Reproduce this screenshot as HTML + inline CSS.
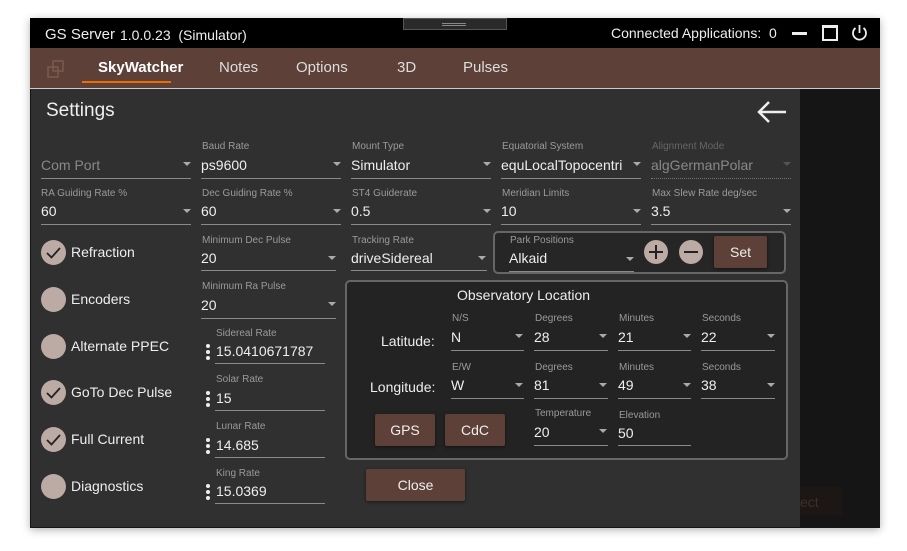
<!DOCTYPE html>
<html><head><meta charset="utf-8"><style>
*{margin:0;padding:0;box-sizing:border-box}
body{width:907px;height:551px;background:#fff;font-family:"Liberation Sans",sans-serif;position:relative;overflow:hidden}
.a{position:absolute;white-space:nowrap}
.lb{position:absolute;font-size:10px;color:#9a9a9a;white-space:nowrap}
.v{position:absolute;font-size:14px;color:#eee;white-space:nowrap}
.u{position:absolute;height:1px;background:#8a8a8a}
.ar{position:absolute;width:0;height:0;border-left:4px solid transparent;border-right:4px solid transparent;border-top:4px solid #aaa}
.cb{position:absolute;width:25px;height:25px;border-radius:50%;background:#bcaaa4}
.cl{position:absolute;font-size:14px;color:#eee}
.btn{position:absolute;background:#5d4037;color:#eee;font-size:14px;text-align:center;border-radius:2px;box-shadow:0 1px 3px rgba(0,0,0,.5)}
.dots{position:absolute;width:4px}
.dots i{display:block;width:4px;height:4px;border-radius:50%;background:#eee;margin-bottom:2px}
</style></head><body>
<div class="a" style="left:30px;top:18px;width:850px;height:510px;background:#151515;box-shadow:0 2px 8px rgba(0,0,0,.3)"></div>
<div class="a" style="left:30px;top:18px;width:850px;height:30px;background:#000"></div>
<div class="a" style="left:403px;top:18px;width:104px;height:12px;background:#2a2a2a;border:1px solid #555"></div>
<div class="a" style="left:442px;top:23px;width:24px;height:1px;background:#888"></div>
<div class="a" style="left:442px;top:25px;width:24px;height:1px;background:#888"></div>
<div class="a" style="left:45px;top:26px;font-size:15px;color:#eee">GS Server</div>
<div class="a" style="left:120px;top:27px;font-size:14px;color:#eee">1.0.0.23 &nbsp;(Simulator)</div>
<div class="a" style="left:611px;top:25px;font-size:14px;color:#eee">Connected Applications: &nbsp;0</div>
<div class="a" style="left:792px;top:32px;width:15px;height:3px;background:#eee"></div>
<div class="a" style="left:822px;top:25px;width:16px;height:16px;border:2px solid #eee;border-top-width:3px"></div>
<svg class="a" style="left:850px;top:23px" width="19" height="19" viewBox="0 0 19 19"><path d="M5.5 5 A6.5 6.5 0 1 0 13.5 5" fill="none" stroke="#eee" stroke-width="1.8"/><path d="M9.5 2 V10" stroke="#eee" stroke-width="1.8"/></svg>
<div class="a" style="left:30px;top:48px;width:850px;height:40px;background:#5d4037"></div>
<svg class="a" style="left:47px;top:60px" width="18" height="18" viewBox="0 0 18 18"><rect x="1" y="7" width="10" height="10" fill="none" stroke="#7a5a50" stroke-width="1.5"/><rect x="6" y="1" width="10" height="10" fill="none" stroke="#7a5a50" stroke-width="1.5"/></svg>
<div class="a" style="left:98px;top:59px;font-size:15px;color:#fff;font-weight:bold">SkyWatcher</div>
<div class="a" style="left:82px;top:81px;width:89px;height:2px;background:#ef6c00"></div>
<div class="a" style="left:219px;top:59px;font-size:15px;color:#ddd">Notes</div>
<div class="a" style="left:296px;top:59px;font-size:15px;color:#ddd">Options</div>
<div class="a" style="left:397px;top:59px;font-size:15px;color:#ddd">3D</div>
<div class="a" style="left:463px;top:59px;font-size:15px;color:#ddd">Pulses</div>
<div class="a" style="left:30px;top:88px;width:850px;height:1px;background:#ccc"></div>
<div class="a" style="left:31px;top:89px;width:769px;height:438px;background:#303030"></div>
<div class="a" style="left:46px;top:100px;font-size:19px;color:#eee">Settings</div>
<svg class="a" style="left:756px;top:99px" width="32" height="26" viewBox="0 0 32 26"><path d="M30 13 H3 M13 3 L3 13 L13 23" fill="none" stroke="#eee" stroke-width="2.5"/></svg>

<!-- Row1 -->
<div class="v" style="left:41px;top:157px;color:#888">Com Port</div><div class="ar" style="left:183px;top:162px"></div><div class="u" style="left:41px;top:178px;width:150px"></div>
<div class="lb" style="left:202px;top:141px">Baud Rate</div><div class="v" style="left:201px;top:157px">ps9600</div><div class="ar" style="left:333px;top:162px"></div><div class="u" style="left:201px;top:178px;width:140px"></div>
<div class="lb" style="left:352px;top:141px">Mount Type</div><div class="v" style="left:351px;top:157px">Simulator</div><div class="ar" style="left:483px;top:162px"></div><div class="u" style="left:351px;top:178px;width:140px"></div>
<div class="lb" style="left:502px;top:141px">Equatorial System</div><div class="v" style="left:501px;top:157px">equLocalTopocentri</div><div class="ar" style="left:633px;top:162px"></div><div class="u" style="left:501px;top:178px;width:140px"></div>
<div class="lb" style="left:652px;top:141px;color:#666">Alignment Mode</div><div class="v" style="left:651px;top:157px;color:#888">algGermanPolar</div><div class="ar" style="left:783px;top:162px;border-top-color:#555"></div><div class="u" style="left:651px;top:178px;width:140px;background:none;border-top:1px dotted #777"></div>
<!-- Row2 -->
<div class="lb" style="left:41px;top:188px">RA Guiding Rate %</div><div class="v" style="left:41px;top:203px">60</div><div class="ar" style="left:183px;top:209px"></div><div class="u" style="left:41px;top:224px;width:150px"></div>
<div class="lb" style="left:202px;top:188px">Dec Guiding Rate %</div><div class="v" style="left:201px;top:203px">60</div><div class="ar" style="left:333px;top:209px"></div><div class="u" style="left:201px;top:224px;width:140px"></div>
<div class="lb" style="left:352px;top:188px">ST4 Guiderate</div><div class="v" style="left:351px;top:203px">0.5</div><div class="ar" style="left:483px;top:209px"></div><div class="u" style="left:351px;top:224px;width:140px"></div>
<div class="lb" style="left:502px;top:188px">Meridian Limits</div><div class="v" style="left:501px;top:203px">10</div><div class="ar" style="left:633px;top:209px"></div><div class="u" style="left:501px;top:224px;width:140px"></div>
<div class="lb" style="left:652px;top:188px">Max Slew Rate deg/sec</div><div class="v" style="left:651px;top:203px">3.5</div><div class="ar" style="left:783px;top:209px"></div><div class="u" style="left:651px;top:224px;width:140px"></div>

<!-- checkboxes -->
<div class="cb" style="left:41px;top:240px"></div><svg class="a" style="left:41px;top:240px" width="25" height="25"><path d="M6 13 L10.5 17.5 L19 8" fill="none" stroke="#222" stroke-width="1.8"/></svg><div class="cl" style="left:71px;top:244px">Refraction</div>
<div class="cb" style="left:41px;top:287px"></div><div class="cl" style="left:71px;top:291px">Encoders</div>
<div class="cb" style="left:41px;top:334px"></div><div class="cl" style="left:71px;top:338px">Alternate PPEC</div>
<div class="cb" style="left:41px;top:380px"></div><svg class="a" style="left:41px;top:380px" width="25" height="25"><path d="M6 13 L10.5 17.5 L19 8" fill="none" stroke="#222" stroke-width="1.8"/></svg><div class="cl" style="left:71px;top:384px">GoTo Dec Pulse</div>
<div class="cb" style="left:41px;top:427px"></div><svg class="a" style="left:41px;top:427px" width="25" height="25"><path d="M6 13 L10.5 17.5 L19 8" fill="none" stroke="#222" stroke-width="1.8"/></svg><div class="cl" style="left:71px;top:431px">Full Current</div>
<div class="cb" style="left:41px;top:474px"></div><div class="cl" style="left:71px;top:478px">Diagnostics</div>

<div class="lb" style="left:202px;top:235px">Minimum Dec Pulse</div><div class="v" style="left:201px;top:250px">20</div><div class="ar" style="left:328px;top:256px"></div><div class="u" style="left:201px;top:270px;width:135px"></div>
<div class="lb" style="left:352px;top:235px">Tracking Rate</div><div class="v" style="left:351px;top:250px">driveSidereal</div><div class="ar" style="left:478px;top:256px"></div><div class="u" style="left:351px;top:270px;width:136px"></div>
<div class="lb" style="left:202px;top:281px">Minimum Ra Pulse</div><div class="v" style="left:201px;top:297px">20</div><div class="ar" style="left:328px;top:302px"></div><div class="u" style="left:201px;top:318px;width:135px"></div>

<!-- rates -->
<div class="lb" style="left:216px;top:328px">Sidereal Rate</div><div class="dots" style="left:206px;top:344px"><i></i><i></i><i></i></div><div class="v" style="left:216px;top:343px">15.0410671787</div><div class="u" style="left:215px;top:363px;width:110px"></div>
<div class="lb" style="left:216px;top:374px">Solar Rate</div><div class="dots" style="left:206px;top:391px"><i></i><i></i><i></i></div><div class="v" style="left:216px;top:390px">15</div><div class="u" style="left:215px;top:410px;width:110px"></div>
<div class="lb" style="left:216px;top:421px">Lunar Rate</div><div class="dots" style="left:206px;top:438px"><i></i><i></i><i></i></div><div class="v" style="left:216px;top:437px">14.685</div><div class="u" style="left:215px;top:457px;width:110px"></div>
<div class="lb" style="left:216px;top:468px">King Rate</div><div class="dots" style="left:206px;top:484px"><i></i><i></i><i></i></div><div class="v" style="left:216px;top:483px">15.0369</div><div class="u" style="left:215px;top:503px;width:110px"></div>

<!-- park -->
<div class="a" style="left:493px;top:231px;width:293px;height:43px;border:2px solid #666;border-radius:5px;background:#262626"></div>
<div class="lb" style="left:510px;top:235px">Park Positions</div><div class="v" style="left:509px;top:250px">Alkaid</div><div class="ar" style="left:626px;top:257px"></div><div class="u" style="left:509px;top:271px;width:125px"></div>
<svg class="a" style="left:644px;top:240px" width="24" height="24"><circle cx="12" cy="12" r="12" fill="#bcaaa4"/><path d="M5 12H19M12 5V19" stroke="#222" stroke-width="2"/></svg>
<svg class="a" style="left:679px;top:240px" width="24" height="24"><circle cx="12" cy="12" r="12" fill="#bcaaa4"/><path d="M5 12H19" stroke="#222" stroke-width="2"/></svg>
<div class="btn" style="left:714px;top:236px;width:53px;height:32px;line-height:32px">Set</div>

<!-- observatory -->
<div class="a" style="left:345px;top:280px;width:443px;height:180px;border:2px solid #666;border-radius:5px;background:#232323"></div>
<div class="a" style="left:457px;top:287px;font-size:14px;color:#eee">Observatory Location</div>
<div class="a" style="left:381px;top:333px;font-size:14px;color:#eee">Latitude:</div>
<div class="a" style="left:370px;top:379px;font-size:14px;color:#eee">Longitude:</div>
<div class="lb" style="left:452px;top:313px">N/S</div><div class="v" style="left:451px;top:329px">N</div><div class="ar" style="left:515px;top:334px"></div><div class="u" style="left:451px;top:350px;width:73px"></div>
<div class="lb" style="left:535px;top:313px">Degrees</div><div class="v" style="left:534px;top:329px">28</div><div class="ar" style="left:599px;top:334px"></div><div class="u" style="left:534px;top:350px;width:74px"></div>
<div class="lb" style="left:619px;top:313px">Minutes</div><div class="v" style="left:618px;top:329px">21</div><div class="ar" style="left:683px;top:334px"></div><div class="u" style="left:618px;top:350px;width:73px"></div>
<div class="lb" style="left:702px;top:313px">Seconds</div><div class="v" style="left:701px;top:329px">22</div><div class="ar" style="left:767px;top:334px"></div><div class="u" style="left:701px;top:350px;width:74px"></div>
<div class="lb" style="left:452px;top:362px">E/W</div><div class="v" style="left:451px;top:377px">W</div><div class="ar" style="left:515px;top:383px"></div><div class="u" style="left:451px;top:398px;width:73px"></div>
<div class="lb" style="left:535px;top:362px">Degrees</div><div class="v" style="left:534px;top:377px">81</div><div class="ar" style="left:599px;top:383px"></div><div class="u" style="left:534px;top:398px;width:74px"></div>
<div class="lb" style="left:619px;top:362px">Minutes</div><div class="v" style="left:618px;top:377px">49</div><div class="ar" style="left:683px;top:383px"></div><div class="u" style="left:618px;top:398px;width:73px"></div>
<div class="lb" style="left:702px;top:362px">Seconds</div><div class="v" style="left:701px;top:377px">38</div><div class="ar" style="left:767px;top:383px"></div><div class="u" style="left:701px;top:398px;width:74px"></div>
<div class="btn" style="left:375px;top:414px;width:60px;height:32px;line-height:32px">GPS</div>
<div class="btn" style="left:445px;top:414px;width:60px;height:32px;line-height:32px">CdC</div>
<div class="lb" style="left:535px;top:408px">Temperature</div><div class="v" style="left:534px;top:424px">20</div><div class="ar" style="left:599px;top:429px"></div><div class="u" style="left:534px;top:445px;width:74px"></div>
<div class="lb" style="left:619px;top:410px">Elevation</div><div class="v" style="left:618px;top:425px">50</div><div class="u" style="left:618px;top:445px;width:73px"></div>
<div class="btn" style="left:366px;top:469px;width:99px;height:32px;line-height:32px">Close</div>

<div class="a" style="left:800px;top:487px;width:42px;height:28px;background:#1c1614"></div>
<div class="a" style="left:800px;top:494px;font-size:14px;color:#3a302c">ect</div>
</body></html>
